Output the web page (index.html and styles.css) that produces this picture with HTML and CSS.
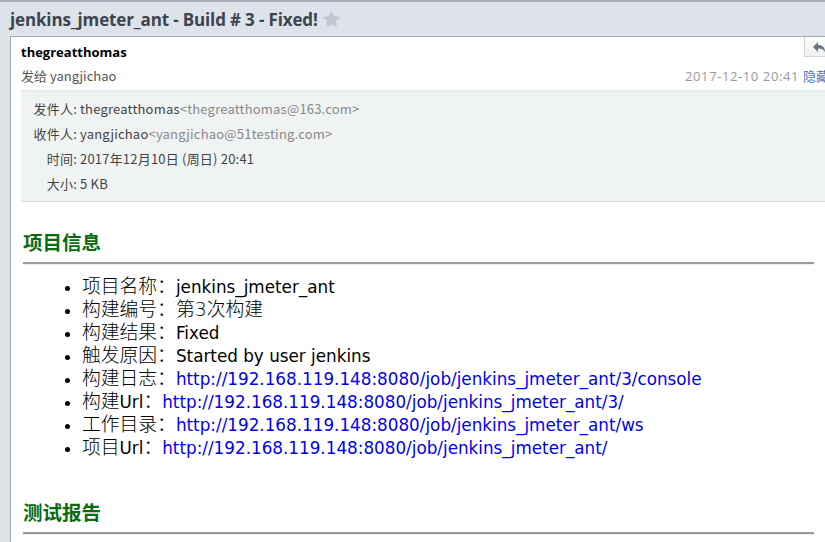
FILE: index.html
```html
<!DOCTYPE html>
<html lang="zh">
<head>
<meta charset="utf-8">
<title>jenkins_jmeter_ant - Build # 3 - Fixed!</title>
<link rel="stylesheet" href="styles.css">
</head>
<body>
<div class="titlebar">
  <h1 class="subject">jenkins_jmeter_ant - Build # 3 - Fixed!</h1>
  <svg class="star" width="19" height="18" viewBox="0 0 24 23"><path d="M12 0.8l3.4 7.2 7.8 1-5.7 5.4 1.4 7.8L12 18.4l-6.9 3.8 1.4-7.8L0.8 9l7.8-1z" fill="#c2c7cd"/></svg>
</div>
<div class="card">
  <div class="mailhead">
    <div class="row1">
      <span class="from">thegreatthomas</span>
      <span class="reply"><svg width="12" height="10" viewBox="0 0 12 10"><path d="M0 5l5-5v3c4 0 7 2 7 7-1.5-2.5-3.5-3.5-7-3.5V10z" fill="#6d7680"/></svg></span>
    </div>
    <div class="row2">
      <span class="to">发给 yangjichao</span>
      <span class="date">2017-12-10 20:41 <a class="hide">隐藏</a></span>
    </div>
  </div>
  <div class="info">
    <span class="lbl">发件人:</span><span class="val">thegreatthomas<span class="addr">&lt;thegreatthomas@163.com&gt;</span></span>
    <span class="lbl">收件人:</span><span class="val">yangjichao<span class="addr">&lt;yangjichao@51testing.com&gt;</span></span>
    <span class="lbl">时间:</span><span class="val">2017年12月10日 (周日) 20:41</span>
    <span class="lbl">大小:</span><span class="val">5 KB</span>
  </div>
  <div class="content">
    <h2 class="sec">项目信息</h2>
    <hr class="rule">
    <ul class="items">
      <li><span class="k">项目名称：</span>jenkins_jmeter_ant</li>
      <li><span class="k">构建编号：第3次构建</span></li>
      <li><span class="k">构建结果：</span>Fixed</li>
      <li><span class="k">触发原因：</span>Started by user jenkins</li>
      <li><span class="k">构建日志：</span><a href="#">http://192.168.119.148:8080/job/jenkins_jmeter_ant/3/console</a></li>
      <li><span class="k">构建</span>Url<span class="k">：</span><a href="#">http://192.168.119.148:8080/job/jenkins_jmeter_ant/3/</a></li>
      <li><span class="k">工作目录：</span><a href="#">http://192.168.119.148:8080/job/jenkins_jmeter_ant/ws</a></li>
      <li><span class="k">项目</span>Url<span class="k">：</span><a href="#">http://192.168.119.148:8080/job/jenkins_jmeter_ant/</a></li>
    </ul>
    <h2 class="sec sec2">测试报告</h2>
    <hr class="rule">
  </div>
</div>
</body>
</html>
```
FILE: styles.css
```css
html, body {
  margin: 0;
  padding: 0;
  height: 100%;
  overflow: hidden;
}
body {
  background: #dde3e9;
  border-top: 2px solid #a9afb6;
  box-sizing: border-box;
  font-family: "Noto Sans CJK SC", "Noto Sans", sans-serif;
}
.titlebar {
  display: flex;
  align-items: center;
  height: 34px;
  padding-left: 10px;
}
.subject {
  margin: 0;
  font-family: "Open Sans", "Noto Sans CJK SC", sans-serif;
  font-size: 17px;
  font-weight: 700;
  color: #3d4450;
  letter-spacing: -0.15px;
}
.star {
  margin-left: 4px;
}
.card {
  margin-left: 10px;
  width: 860px;
  height: 600px;
  background: #fff;
  border-top: 1px solid #a3aab2;
  border-left: 1px solid #a3aab2;
}
.mailhead {
  padding: 0 0 0 10px;
  height: 53px;
}
.row1 {
  display: flex;
  justify-content: space-between;
  align-items: flex-start;
  height: 26px;
}
.from {
  font-family: "Open Sans", "Noto Sans CJK SC", sans-serif;
  font-weight: 700;
  font-size: 13px;
  color: #000;
  margin-top: 6px;
}
.reply {
  margin-right: 27px;
  width: 40px;
  height: 20px;
  border: 1px solid #cfd3d7;
  border-top: none;
  background: linear-gradient(#fdfdfd, #eef0f2);
  display: flex;
  align-items: center;
  padding-left: 8px;
  box-sizing: border-box;
}
.row2 {
  display: flex;
  justify-content: space-between;
  font-size: 13px;
  color: #555;
  height: 24px;
  align-items: center;
}
.date {
  font-family: "Open Sans", "Noto Sans CJK SC", sans-serif;
  color: #999;
  letter-spacing: 0.6px;
  margin-right: 42px;
}
.hide {
  font-family: "Noto Sans CJK SC", sans-serif;
  letter-spacing: 0;
  color: #4a78b5;
}
.info {
  margin-left: 10px;
  background: #f0f3f3;
  border-top: 1px solid #e4e7e7;
  border-bottom: 1px solid #d9dbdb;
  display: grid;
  grid-template-columns: 56px 1fr;
  column-gap: 3px;
  grid-auto-rows: 25px;
  align-items: center;
  padding: 5px 0 5px;
  font-size: 13px;
  letter-spacing: 0.2px;
  color: #444;
}
.lbl {
  text-align: right;
}
.addr {
  color: #888;
}
.content {
  padding-left: 12px;
  width: 791px;
}
.sec {
  margin: 26px 0 0;
  font-family: "Noto Sans CJK SC", sans-serif;
  font-size: 19.5px;
  font-weight: 700;
  color: #0a6b12;
  line-height: 28px;
}
.sec2 {
  margin-top: 38px;
}
.rule {
  margin: 6px 0 0;
  border: none;
  border-top: 2px solid #999;
  border-bottom: 1px solid #eee;
}
.items {
  margin: 11px 0 0;
  padding-left: 59px;
  font-family: "DejaVu Sans", "Noto Sans CJK SC", sans-serif;
  font-size: 16.8px;
  line-height: 23px;
  color: #000;
}
.k {
  font-size: 18.8px;
  font-weight: 300;
  line-height: 1;
}
.items a {
  color: #0000ee;
  text-decoration: none;
}
```
